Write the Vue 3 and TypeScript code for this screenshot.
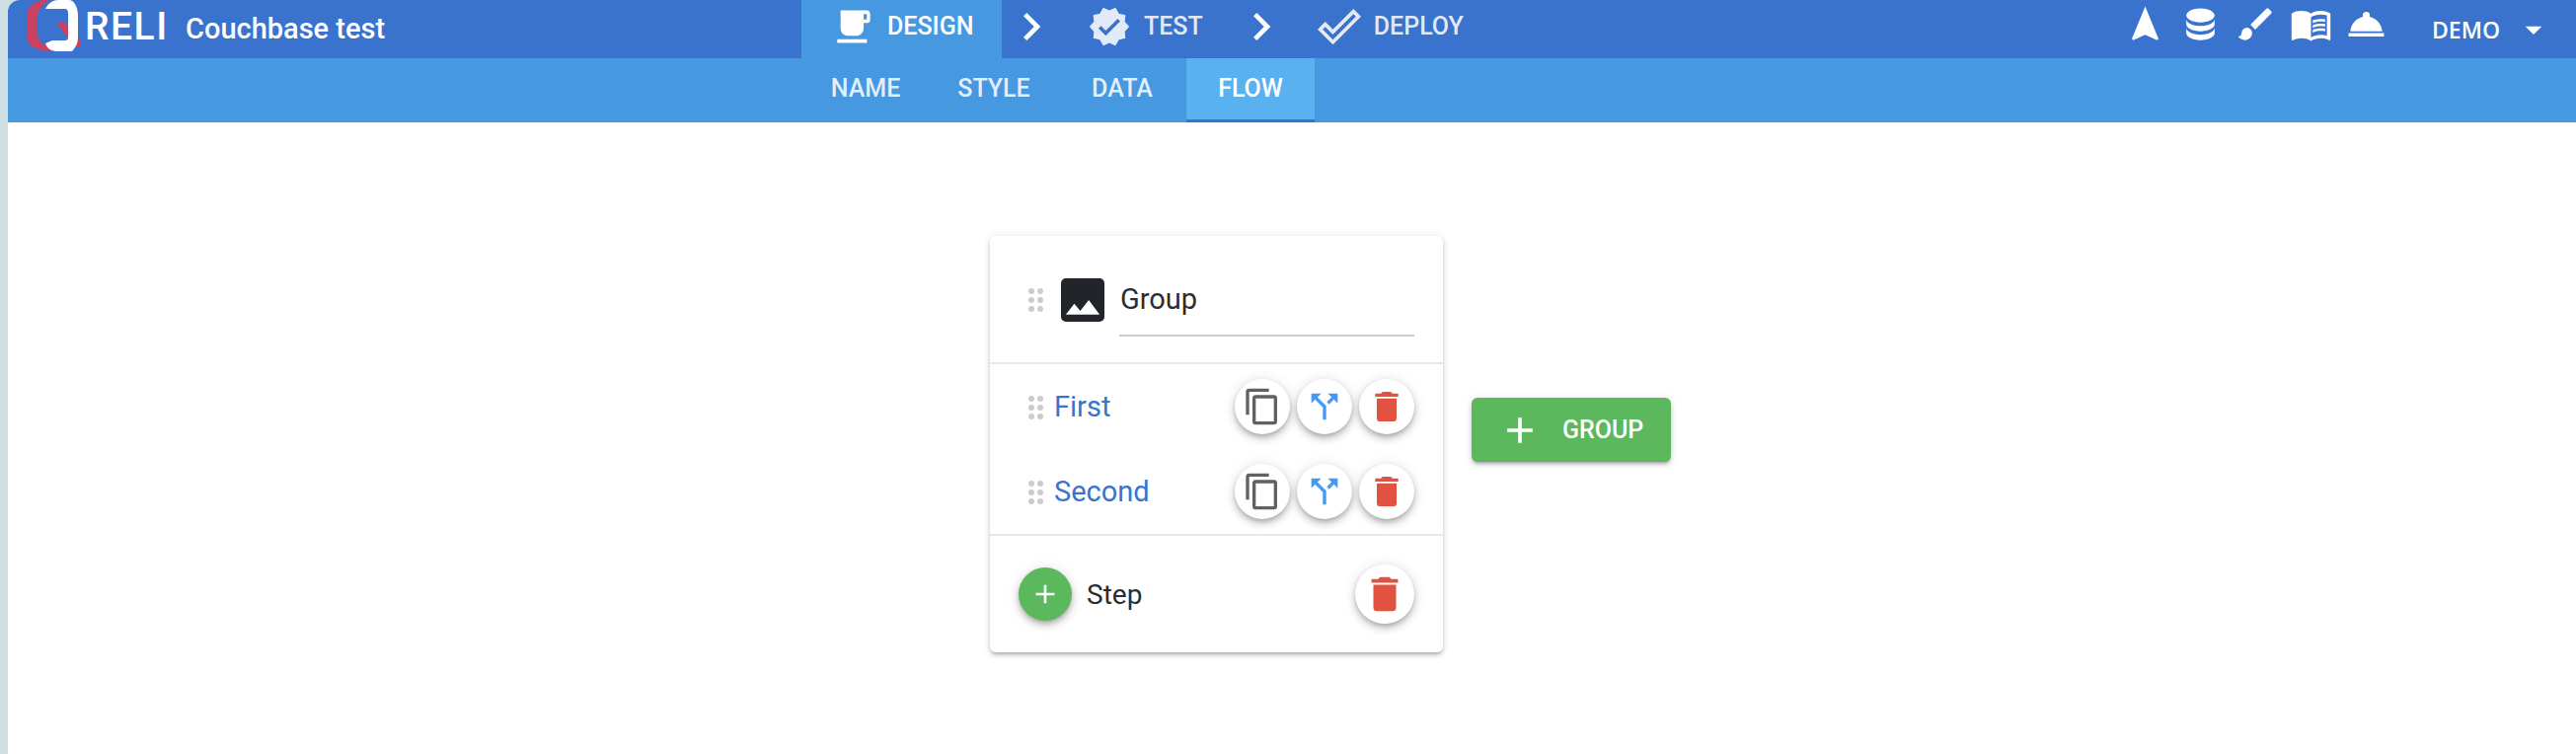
<script setup lang="ts">
const icons = {
  coffee: 'M2,21H20V19H2M20,8H18V5H20M20,3H4V13A4,4 0 0,0 8,17H14A4,4 0 0,0 18,13V10H20A2,2 0 0,0 22,8V5C22,3.89 21.1,3 20,3Z',
  decagram: 'M23,12L20.56,9.22L20.9,5.54L17.29,4.72L15.4,1.54L12,3L8.6,1.54L6.71,4.72L3.1,5.53L3.44,9.21L1,12L3.44,14.78L3.1,18.47L6.71,19.29L8.6,22.47L12,21L15.4,22.46L17.29,19.28L20.9,18.46L20.56,14.78L23,12M10,17L6,13L7.41,11.59L10,14.17L16.59,7.58L18,9L10,17Z',
  checkOutline: 'M19.78,2.2L24,6.42L8.44,22L0,13.55L4.22,9.33L8.44,13.55L19.78,2.2M19.78,5L8.44,16.36L4.22,12.16L2.81,13.55L8.44,19.17L21.19,6.42L19.78,5Z',
  chevron: 'M8.59,16.58L13.17,12L8.59,7.41L10,6L16,12L10,18L8.59,16.58Z',
  navigation: 'M12,2L4.5,20.29L5.21,21L12,18L18.79,21L19.5,20.29L12,2Z',
  database: 'M12,3C7.58,3 4,4.79 4,7C4,9.21 7.58,11 12,11C16.42,11 20,9.21 20,7C20,4.79 16.42,3 12,3M4,9V12C4,14.21 7.58,16 12,16C16.42,16 20,14.21 20,12V9C20,11.21 16.42,13 12,13C7.58,13 4,11.21 4,9M4,14V17C4,19.21 7.58,21 12,21C16.42,21 20,19.21 20,17V14C20,16.21 16.42,18 12,18C7.58,18 4,16.21 4,14Z',
  brush: 'M20.71,4.63L19.37,3.29C19,2.9 18.35,2.9 17.96,3.29L9,12.25L11.75,15L20.71,6.04C21.1,5.65 21.1,5 20.71,4.63M7,14A3,3 0 0,0 4,17C4,18.31 2.84,19 2,19C2.92,20.22 4.5,21 6,21A4,4 0 0,0 10,17A3,3 0 0,0 7,14Z',
  book: 'M21,5C19.89,4.65 18.67,4.5 17.5,4.5C15.55,4.5 13.45,4.9 12,6C10.55,4.9 8.45,4.5 6.5,4.5C4.55,4.5 2.45,4.9 1,6V20.65C1,20.9 1.25,21.15 1.5,21.15C1.6,21.15 1.65,21.1 1.75,21.1C3.1,20.45 5.05,20 6.5,20C8.45,20 10.55,20.4 12,21.5C13.35,20.65 15.8,20 17.5,20C19.15,20 20.85,20.3 22.25,21.05C22.35,21.1 22.4,21.1 22.5,21.1C22.75,21.1 23,20.85 23,20.6V6C22.4,5.55 21.75,5.25 21,5M21,18.5C19.9,18.15 18.7,18 17.5,18C15.8,18 13.35,18.65 12,19.5V8C13.35,7.15 15.8,6.5 17.5,6.5C18.7,6.5 19.9,6.65 21,7V18.5Z M17.5,10.5C18.38,10.5 19.23,10.59 20,10.76V9.24C19.21,9.09 18.36,9 17.5,9C15.8,9 14.26,9.29 13,9.83V11.49C14.13,10.85 15.7,10.5 17.5,10.5M13,12.49V14.15C14.13,13.51 15.7,13.16 17.5,13.16C18.38,13.16 19.23,13.25 20,13.42V11.9C19.21,11.75 18.36,11.66 17.5,11.66C15.8,11.66 14.26,11.96 13,12.49M17.5,14.33C15.8,14.33 14.26,14.62 13,15.16V16.82C14.13,16.18 15.7,15.83 17.5,15.83C18.38,15.83 19.23,15.92 20,16.09V14.57C19.21,14.41 18.36,14.33 17.5,14.33Z',
  bell: 'M2,17H22V19H2V17M13.84,7.79C13.94,7.55 14,7.28 14,7A2,2 0 0,0 12,5A2,2 0 0,0 10,7C10,7.28 10.06,7.55 10.16,7.79C6.25,8.6 3.27,11.93 3,16H21C20.73,11.93 17.75,8.6 13.84,7.79Z',
  copy: 'M19,21H8V7H19M19,5H8A2,2 0 0,0 6,7V21A2,2 0 0,0 8,23H19A2,2 0 0,0 21,21V7A2,2 0 0,0 19,5M16,1H4A2,2 0 0,0 2,3V17H4V3H16V1Z',
  split: 'M14,4L16.29,6.29L13.41,9.17L14.83,10.59L17.71,7.71L20,10V4M10,4H4V10L6.29,7.71L11,12.41V20H13V11.59L7.71,6.29',
  trash: 'M19,4H15.5L14.5,3H9.5L8.5,4H5V6H19M6,19A2,2 0 0,0 8,21H16A2,2 0 0,0 18,19V7H6V19Z',
  image: 'M8.5,13.5L11,16.5L14.5,12L19,18H5M21,19V5C21,3.89 20.1,3 19,3H5A2,2 0 0,0 3,5V19A2,2 0 0,0 5,21H19A2,2 0 0,0 21,19Z',
  plus: 'M19,13H13V19H11V13H5V11H11V5H13V11H19V13Z',
  caret: 'M7,10L12,15L17,10H7Z',
}

const toolIcons = [icons.navigation, icons.database, icons.brush, icons.book, icons.bell]
const subTabs = ['Name', 'Style', 'Data', 'Flow']
const steps = ['First', 'Second']
const dots = [
  [3, 3], [12, 3], [3, 12], [12, 12], [3, 21], [12, 21],
]
</script>

<template>
  <div class="frame">
    <header class="topbar">
      <div class="brand">
        <div class="logo">
          <svg class="logo-q" viewBox="0 0 64 59" width="64" height="59">
            <path d="M24 0C13 1 7 8 7 16V36C7 45 14 51 33 52L36 48C24 47 18 42 18 34V17C18 10 24 4 30 0Z" fill="#cb4162" />
            <path d="M37 22.5H45L62 42V47H55Z" fill="#cb4162" />
            <path d="M26 9C29 3 34 0 39 0H50C55 0 59 7 59 16V38C59 43 57 48 53 52H38C33 52 28 50 26 44L33 41H46C48 41 49 40 49 38V14C49 10 48 9 45 9Z" fill="#fff" />
          </svg>
          <span class="logo-text">RELI</span>
        </div>
        <span class="title">Couchbase test</span>
      </div>
      <nav class="steps">
        <div class="step step-active">
          <svg class="design-icon" viewBox="0 0 24 24" preserveAspectRatio="none"><path :d="icons.coffee" /></svg>
          <span>Design</span>
        </div>
        <svg class="chev" viewBox="0 0 24 24"><path :d="icons.chevron" /></svg>
        <div class="step">
          <svg class="step-icon" viewBox="0 0 24 24"><path :d="icons.decagram" /></svg>
          <span>Test</span>
        </div>
        <svg class="chev" viewBox="0 0 24 24"><path :d="icons.chevron" /></svg>
        <div class="step">
          <svg class="step-icon" viewBox="0 0 24 24"><path :d="icons.checkOutline" /></svg>
          <span>Deploy</span>
        </div>
      </nav>
      <div class="tools">
        <svg v-for="(d, i) in toolIcons" :key="i" class="tool" viewBox="0 0 24 24"><path :d="d" /></svg>
      </div>
      <div class="user">
        <span>DEMO</span>
        <svg class="caret" viewBox="0 0 24 24"><path :d="icons.caret" /></svg>
      </div>
    </header>

    <div class="subbar">
      <div
        v-for="t in subTabs"
        :key="t"
        class="subtab"
        :class="{ 'subtab-active': t === 'Flow' }"
      >{{ t }}</div>
    </div>

    <main class="canvas">
      <section class="card">
        <div class="group-head">
          <svg class="drag" viewBox="0 0 15 24" width="15" height="24">
            <circle v-for="(p, i) in dots" :key="i" :cx="p[0]" :cy="p[1]" r="3" />
          </svg>
          <svg class="image-icon" viewBox="3 3 18 18"><path :d="icons.image" /></svg>
          <div class="name-field">Group</div>
        </div>

        <div class="step-list">
          <div v-for="s in steps" :key="s" class="step-row">
            <svg class="drag" viewBox="0 0 15 24" width="15" height="24">
              <circle v-for="(p, i) in dots" :key="i" :cx="p[0]" :cy="p[1]" r="3" />
            </svg>
            <a class="step-link">{{ s }}</a>
            <div class="row-actions">
              <button class="round"><svg class="icon-copy" viewBox="0 0 24 24"><path :d="icons.copy" /></svg></button>
              <button class="round"><svg class="icon-split" viewBox="0 0 24 24"><path :d="icons.split" /></svg></button>
              <button class="round"><svg class="icon-trash" viewBox="0 0 24 24"><path :d="icons.trash" /></svg></button>
            </div>
          </div>
        </div>

        <div class="card-foot">
          <button class="fab-add"><svg viewBox="0 0 24 24"><path :d="icons.plus" /></svg></button>
          <span class="foot-label">Step</span>
          <button class="round round-lg"><svg class="icon-trash" viewBox="0 0 24 24"><path :d="icons.trash" /></svg></button>
        </div>
      </section>

      <button class="add-group">
        <svg viewBox="0 0 24 24"><path :d="icons.plus" /></svg>
        <span>Group</span>
      </button>
    </main>
  </div>
</template>

<style>
html, body { margin: 0; background: #cfe0e5; }
</style>

<style scoped>
.frame {
  margin-left: 8px;
  height: 764px;
  background: #fff;
  border-top-left-radius: 12px;
  overflow: hidden;
  font-family: Roboto, sans-serif;
  display: flex;
  flex-direction: column;
}
.topbar {
  height: 59px;
  background: #3973cd;
  color: #fff;
  display: flex;
  align-items: stretch;
}
.brand { width: 804px; display: flex; align-items: center; flex: none; }
.logo { width: 168px; margin-left: 12px; height: 59px; display: flex; position: relative; flex: none; }
.logo-q { position: absolute; left: 0; top: 0; }
.logo-text { margin-left: 66px; font-size: 39px; font-weight: 500; line-height: 54px; letter-spacing: 1.5px; }
.title { font-size: 29px; font-weight: 500; margin-top: -2px; }
.steps { display: flex; align-items: stretch; }
.step {
  display: flex;
  align-items: center;
  gap: 13px;
  padding: 0 31px 6px 29px;
  font-size: 25px;
  font-weight: 500;
  text-transform: uppercase;
  color: rgba(255,255,255,.85);
}
.step svg { fill: rgba(255,255,255,.85); }
.step-active { background: #4699e1; color: #fff; width: 203px; box-sizing: border-box; padding: 0 0 6px 33px; gap: 14px; }
.step-active svg { fill: #fff; }
.design-icon { width: 40px; height: 44px; flex: none; }
.step-icon { width: 44px; height: 44px; flex: none; }
.chev { width: 56px; height: 56px; fill: #fff; align-self: flex-start; flex: none; margin-top: -1px; }
.steps > .step:first-child + .chev { margin-left: 2px; }
.tools { margin-left: auto; display: flex; align-items: center; gap: 13px; padding-bottom: 10px; }
.tool { width: 43px; height: 43px; fill: #fff; }
.user {
  display: flex;
  align-items: center;
  margin-left: 45px;
  padding-right: 23px;
  font-family: "Open Sans", sans-serif;
  font-size: 23px;
  font-weight: 600;
}
.caret { width: 40px; height: 40px; fill: #fff; margin-left: 14px; }
.subbar {
  height: 65px;
  background: #4699e1;
  padding-left: 804px;
  display: flex;
}
.subtab {
  display: flex;
  align-items: center;
  justify-content: center;
  box-sizing: border-box;
  width: 130px;
  padding-bottom: 5px;
  font-size: 25px;
  font-weight: 500;
  text-transform: uppercase;
  color: rgba(255,255,255,.85);
}
.subtab-active {
  background: #5ab1f0;
  color: #fff;
  box-shadow: inset 0 -3px 0 #3973cd;
}
.canvas {
  flex: 1;
  display: flex;
  align-items: flex-start;
  padding: 115px 0 0 995px;
  gap: 29px;
}
.card {
  width: 459px;
  height: 422px;
  background: #fff;
  border-radius: 6px;
  box-shadow: 0 3px 3px -2px rgba(0,0,0,.2), 0 3px 4px rgba(0,0,0,.14), 0 1px 8px rgba(0,0,0,.12);
  display: flex;
  flex-direction: column;
  color: #2a2d31;
}
.group-head {
  height: 130px;
  box-sizing: border-box;
  border-bottom: 2px solid #e8e8e8;
  display: flex;
  align-items: flex-start;
  padding: 43px 29px 0 39px;
}
.drag { fill: #ccc; flex: none; }
.group-head .drag { margin-top: 10px; }
.image-icon { width: 44px; height: 44px; fill: #212529; margin-left: 18px; flex: none; }
.name-field {
  margin-left: 15px;
  flex: 1;
  height: 59px;
  box-sizing: border-box;
  border-bottom: 2px solid #ccc;
  font-size: 29px;
  line-height: 42px;
  padding-left: 1px;
}
.step-list { height: 174px; box-sizing: border-box; border-bottom: 2px solid #e8e8e8; padding-top: 15px; }
.step-row { height: 86px; display: flex; align-items: flex-start; padding: 0 29px 0 39px; box-sizing: border-box; }
.step-row .drag { margin-top: 17px; }
.step-link { margin-left: 11px; font-size: 29px; line-height: 56px; color: #3973cd; }
.row-actions { margin-left: auto; display: flex; gap: 7px; }
.round {
  width: 56px;
  height: 56px;
  border: 0;
  padding: 0;
  border-radius: 50%;
  background: #fff;
  box-shadow: 0 3px 5px -1px rgba(0,0,0,.2), 0 5px 8px rgba(0,0,0,.14), 0 1px 14px rgba(0,0,0,.12);
  display: flex;
  align-items: center;
  justify-content: center;
}
.round svg { width: 40px; height: 40px; }
.icon-copy { fill: #616161; }
.icon-split { fill: #4699f0; }
.icon-trash { fill: #e25241; }
.card-foot {
  flex: 1;
  display: flex;
  align-items: center;
  padding: 0 29px 0 29px;
}
.fab-add {
  width: 54px;
  height: 54px;
  border: 0;
  padding: 0;
  border-radius: 50%;
  background: #5cb85c;
  box-shadow: 0 3px 5px -1px rgba(0,0,0,.2), 0 5px 8px rgba(0,0,0,.14), 0 1px 14px rgba(0,0,0,.12);
  display: flex;
  align-items: center;
  justify-content: center;
}
.fab-add svg { width: 32px; height: 32px; fill: #fff; }
.foot-label { margin-left: 15px; font-size: 28px; }
.round-lg { margin-left: auto; width: 60px; height: 60px; }
.round-lg svg { width: 46px; height: 46px; }
.add-group {
  margin-top: 164px;
  width: 202px;
  height: 65px;
  border: 0;
  padding: 0 0 0 27px;
  border-radius: 6px;
  background: #5cb85c;
  color: #fff;
  font-family: Roboto, sans-serif;
  font-size: 25px;
  font-weight: 500;
  text-transform: uppercase;
  display: flex;
  align-items: center;
  gap: 21px;
  box-shadow: 0 3px 3px -2px rgba(0,0,0,.2), 0 3px 4px rgba(0,0,0,.14), 0 1px 8px rgba(0,0,0,.12);
}
.add-group svg { width: 44px; height: 44px; fill: #fff; flex: none; }
</style>
